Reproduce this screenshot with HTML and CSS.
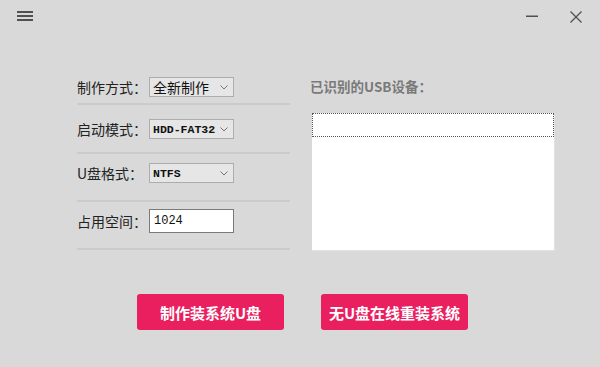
FILE: index.html
```html
<!DOCTYPE html>
<html lang="zh-CN">
<head>
<meta charset="utf-8">
<link rel="stylesheet" href="styles.css">
</head>
<body>
<div class="app">
  <div class="titlebar">
    <svg class="menu-icon" width="16" height="10" viewBox="0 0 16 10">
      <rect x="0" y="0" width="16" height="2" fill="#505050"/>
      <rect x="0" y="4" width="16" height="2" fill="#505050"/>
      <rect x="0" y="8" width="16" height="2" fill="#505050"/>
    </svg>
    <div class="win-controls">
      <svg width="12" height="12" viewBox="0 0 12 12"><rect x="0" y="4.5" width="12" height="1.5" fill="#505050"/></svg>
      <svg width="12" height="12" viewBox="0 0 12 12"><path d="M0.5 0.5 L11.5 11.5 M11.5 0.5 L0.5 11.5" stroke="#505050" stroke-width="1.3" fill="none"/></svg>
    </div>
  </div>

  <div class="main">
    <div class="form">
      <div class="row row-1">
        <span class="label">制作方式：</span>
        <div class="select"><span class="cjk">全新制作</span><svg class="chev" width="8" height="5" viewBox="0 0 8 5"><path d="M0.5 0.5 L4 4 L7.5 0.5" stroke="#777" fill="none"/></svg></div>
      </div>
      <div class="row row-2">
        <span class="label">启动模式：</span>
        <div class="select"><span class="mono">HDD-FAT32</span><svg class="chev" width="8" height="5" viewBox="0 0 8 5"><path d="M0.5 0.5 L4 4 L7.5 0.5" stroke="#777" fill="none"/></svg></div>
      </div>
      <div class="row row-3">
        <span class="label">U盘格式：</span>
        <div class="select"><span class="mono">NTFS</span><svg class="chev" width="8" height="5" viewBox="0 0 8 5"><path d="M0.5 0.5 L4 4 L7.5 0.5" stroke="#777" fill="none"/></svg></div>
      </div>
      <div class="row row-4">
        <span class="label">占用空间：</span>
        <div class="input">1024</div>
      </div>
    </div>

    <div class="devices">
      <div class="devices-title">已识别的USB设备：</div>
      <div class="listbox">
        <div class="list-focus"></div>
      </div>
    </div>
  </div>

  <div class="actions">
    <button class="btn">制作装系统U盘</button>
    <button class="btn">无U盘在线重装系统</button>
  </div>
</div>
</body>
</html>
```

FILE: styles.css
```css
* { box-sizing: border-box; }

html, body {
  margin: 0;
  padding: 0;
}

body {
  width: 600px;
  height: 367px;
  background: #d9d9d9;
  font-family: "Noto Sans CJK SC", "Noto Sans", sans-serif;
  color: #222;
  overflow: hidden;
}

.titlebar {
  height: 32px;
  display: flex;
  justify-content: space-between;
  align-items: flex-start;
  padding: 11px 18px 0 17px;
}

.win-controls {
  display: flex;
  gap: 32px;
}

.win-controls svg { display: block; }

.main {
  display: flex;
  margin-top: 28px;
  padding-left: 77px;
}

.form {
  width: 213px;
  display: flex;
  flex-direction: column;
}

.row {
  display: flex;
  align-items: center;
  border-bottom: 2px solid #cbcbcb;
}

.row-1 { padding: 17px 0 6px; }
.row-2 { padding: 14px 0 13px; }
.row-3 { padding: 9px 0 17px; }
.row-4 { padding: 7px 0 15px; }

.label {
  width: 72px;
  font-size: 14px;
  line-height: 20px;
  color: #222;
  white-space: nowrap;
}

.select {
  width: 85px;
  height: 20px;
  border: 1px solid #adadad;
  background: #e6e6e6;
  display: flex;
  align-items: center;
  justify-content: space-between;
  padding: 0 5px 0 3px;
}

.select .cjk {
  font-size: 14px;
  line-height: 18px;
  color: #111;
}

.select .mono, .input {
  font-family: "Liberation Mono", "DejaVu Sans Mono", monospace;
  font-weight: 700;
  font-size: 11.5px;
  color: #111;
}

.input {
  width: 85px;
  height: 24px;
  background: #fff;
  border: 1px solid #7a7a7a;
  display: flex;
  align-items: center;
  padding-left: 4px;
  font-weight: 400;
  font-size: 12px;
}

.chev { display: block; }

.devices {
  margin-left: 20px;
}

.devices-title {
  margin-top: 16px;
  font-size: 13.5px;
  line-height: 20px;
  font-weight: 700;
  color: #7a7a7a;
}

.listbox {
  margin-top: 17px;
  margin-left: 2px;
  width: 243px;
  height: 138px;
  background: #fff;
  border-right: 1px solid #e2e2e2;
  border-bottom: 1px solid #e2e2e2;
}

.list-focus {
  height: 24px;
  border: 1px dotted #555;
}

.actions {
  display: flex;
  gap: 37px;
  padding-left: 137px;
  margin-top: 43px;
}

.btn {
  width: 147px;
  height: 36px;
  border: none;
  border-radius: 3px;
  background: #e91f60;
  color: #fff;
  font-family: "Noto Sans CJK SC", "Noto Sans", sans-serif;
  font-size: 15px;
  font-weight: 700;
  padding: 0;
}
```
